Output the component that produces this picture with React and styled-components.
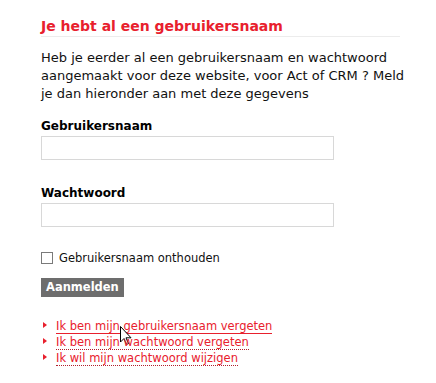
import styled, { createGlobalStyle } from 'styled-components';

const GlobalStyle = createGlobalStyle`
  body {
    margin: 0;
    background: #fff;
    font-family: "DejaVu Sans", Verdana, sans-serif;
    color: #111;
  }
`;

function Cursor() {
  return (
    <CursorSvg width="13" height="20" viewBox="0 0 13 20">
      <path
        d="M0.5 0.5 L0.5 16 L4 12.5 L6.5 18.5 L8.5 17.6 L6 11.8 L11 11.8 Z"
        fill="#fff"
        stroke="#000"
        strokeWidth="1"
        strokeLinejoin="miter"
      />
    </CursorSvg>
  );
}

function App() {
  return (
    <>
      <GlobalStyle />
      <Container>
        <Title>Je hebt al een gebruikersnaam</Title>
        <Intro>
          Heb je eerder al een gebruikersnaam en wachtwoord aangemaakt voor
          deze website, voor Act of CRM ? Meld je dan hieronder aan met deze
          gegevens
        </Intro>
        <Field>
          <Label>Gebruikersnaam</Label>
          <Input type="text" />
        </Field>
        <Field>
          <Label>Wachtwoord</Label>
          <Input type="password" />
        </Field>
        <Remember>
          <Check type="checkbox" />
          Gebruikersnaam onthouden
        </Remember>
        <Button>Aanmelden</Button>
        <Links>
          <LinkItem>
            <Link href="#" $hover>Ik ben mijn gebruikersnaam vergeten</Link>
            <Cursor />
          </LinkItem>
          <LinkItem>
            <Link href="#">Ik ben mijn wachtwoord vergeten</Link>
          </LinkItem>
          <LinkItem>
            <Link href="#">Ik wil mijn wachtwoord wijzigen</Link>
          </LinkItem>
        </Links>
      </Container>
    </>
  );
}

export default App;

const Container = styled.div`
  width: 359px;
  padding: 17px 0 0 41px;
  display: flex;
  flex-direction: column;
  align-items: flex-start;
`;

const Title = styled.h2`
  align-self: stretch;
  margin: 0;
  font-size: 14px;
  line-height: 18px;
  font-weight: bold;
  color: #e8202d;
  padding-bottom: 1px;
  border-bottom: 1px solid #ececec;
`;

const Intro = styled.p`
  width: 375px;
  margin: 12px 0 0;
  font-size: 13px;
  line-height: 18px;
  color: #111;
`;

const Field = styled.div`
  display: flex;
  flex-direction: column;
  margin-top: 15px;
  & + & {
    margin-top: 25px;
  }
`;

const Label = styled.label`
  font-size: 12px;
  line-height: 16px;
  font-weight: bold;
  color: #000;
  margin-bottom: 2px;
`;

const Input = styled.input`
  box-sizing: border-box;
  width: 293px;
  height: 24px;
  margin: 0;
  border: 1px solid #d8d8d8;
  background: #fff;
  outline: none;
`;

const Remember = styled.label`
  display: flex;
  align-items: center;
  gap: 6px;
  margin-top: 24px;
  font-size: 11.5px;
  line-height: 14px;
  color: #111;
`;

const Check = styled.input`
  appearance: none;
  box-sizing: border-box;
  width: 12px;
  height: 12px;
  margin: 0;
  border: 1px solid #7a7a7a;
  background: #fff;
`;

const Button = styled.button`
  margin-top: 13px;
  height: 19px;
  padding: 0 5px;
  border: none;
  background: #6d6d6d;
  color: #fff;
  font-family: "DejaVu Sans", Verdana, sans-serif;
  font-size: 11.5px;
  font-weight: bold;
  line-height: 19px;
`;

const Links = styled.ul`
  list-style: none;
  margin: 21px 0 0;
  padding: 0;
`;

const LinkItem = styled.li`
  position: relative;
  padding-left: 15px;
  font-size: 11.5px;
  line-height: 16px;
  &::before {
    content: '';
    position: absolute;
    left: 2px;
    top: 4px;
    border-left: 4px solid #e8202d;
    border-top: 3px solid transparent;
    border-bottom: 3px solid transparent;
  }
`;

const Link = styled.a`
  color: #e8202d;
  text-decoration: none;
  border-bottom: ${(p) => (p.$hover ? '1px solid #e8202d' : '1px dotted #b0202d')};
`;

const CursorSvg = styled.svg`
  position: absolute;
  left: 79px;
  top: 8px;
`;
